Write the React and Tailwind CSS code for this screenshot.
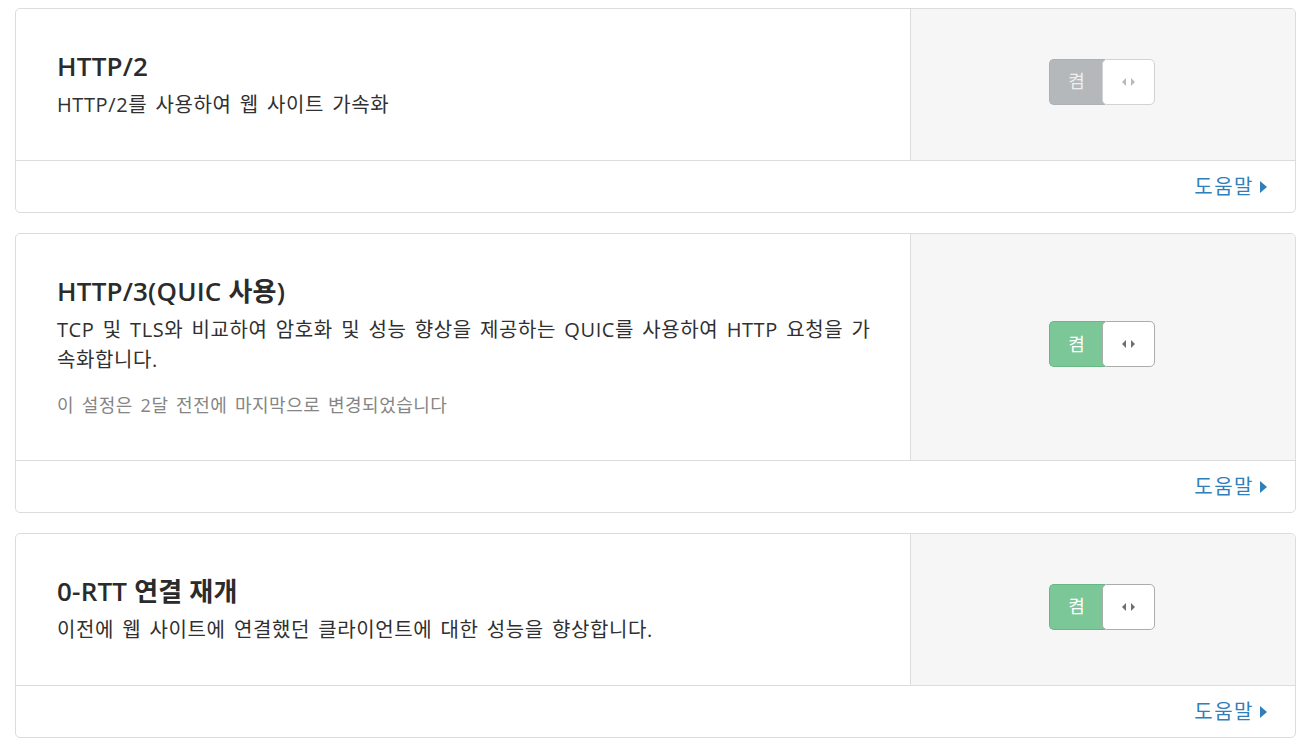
import React from "react";

const settings = [
  {
    id: "http2",
    title: "HTTP/2",
    desc: "HTTP/2를 사용하여 웹 사이트 가속화",
    on: false,
  },
  {
    id: "http3",
    title: "HTTP/3(QUIC 사용)",
    desc: "TCP 및 TLS와 비교하여 암호화 및 성능 향상을 제공하는 QUIC를 사용하여 HTTP 요청을 가속화합니다.",
    note: "이 설정은 2달 전전에 마지막으로 변경되었습니다",
    on: true,
  },
  {
    id: "0rtt",
    title: "0-RTT 연결 재개",
    desc: "이전에 웹 사이트에 연결했던 클라이언트에 대한 성능을 향상합니다.",
    on: true,
  },
];

const Arrows = ({ dark }) => (
  <svg width="13" height="8" viewBox="0 0 13 8">
    <path d="M4 0 L0 4 L4 8 Z" fill={dark ? "#6f6f6f" : "#b9b9b9"} />
    <path d="M9 0 L13 4 L9 8 Z" fill={dark ? "#6f6f6f" : "#b9b9b9"} />
  </svg>
);

const Toggle = ({ on }) => {
  return (
    <div className="mr-[2px] flex h-[46px] w-[106px]">
      <div
        className={
          on
            ? "flex w-[56px] items-center justify-center rounded-l-[5px] border border-r-0 border-[#68b886] bg-[#7bc797] pr-[2px] text-[18px] text-white"
            : "flex w-[56px] items-center justify-center rounded-l-[5px] border border-r-0 border-[#aeb1b4] bg-[#b5b8bb] pr-[2px] text-[18px] text-[#eceeef]"
        }
      >
        켬
      </div>
      <div
        className={
          on
            ? "-ml-[3px] flex flex-1 items-center justify-center rounded-[5px] border border-[#a9aeab] bg-white"
            : "-ml-[3px] flex flex-1 items-center justify-center rounded-[5px] border border-[#d2d2d2] bg-white"
        }
      >
        <Arrows dark={on} />
      </div>
    </div>
  );
};

const SettingCard = ({ item }) => {
  return (
    <div className="overflow-hidden rounded-[5px] border border-[#dcdcdc] bg-white">
      <div className="flex border-b border-[#dcdcdc]">
        <div className="w-[894px] pt-[40px] pr-[34px] pb-[40px] pl-[41px]">
          <h3 className="text-[26px] font-semibold leading-[34px] tracking-[0.2px] text-[#2b2b2b]">
            {item.title}
          </h3>
          <p className="mt-[7px] break-all text-[20px] leading-[30px] tracking-[0.6px] text-[#303030] [word-spacing:2.5px]">
            {item.desc}
          </p>
          {item.note && (
            <p className="mt-[15px] text-[18px] leading-[30px] tracking-[0.5px] text-[#858585] [word-spacing:2.5px]">
              {item.note}
            </p>
          )}
        </div>
        <div className="flex flex-1 items-center justify-center border-l border-[#dcdcdc] bg-[#f6f6f6] pb-[6px]">
          <Toggle on={item.on} />
        </div>
      </div>
      <div className="flex h-[51px] items-center justify-end pr-[28px]">
        <a className="flex items-center gap-[6px] text-[20px] tracking-[1.5px] text-[#2f7fba]" href="#">
          도움말
          <svg width="7" height="12" viewBox="0 0 7 12">
            <path d="M0 0 L7 6 L0 12 Z" fill="#2f7fba" />
          </svg>
        </a>
      </div>
    </div>
  );
};

export default function App() {
  return (
    <div className="min-h-screen bg-white px-[15px] pt-[8px] font-['Open_Sans','Noto_Sans_CJK_KR',sans-serif]">
      <div className="flex flex-col gap-[20px]">
        {settings.map((item) => (
          <SettingCard key={item.id} item={item} />
        ))}
      </div>
    </div>
  );
}
